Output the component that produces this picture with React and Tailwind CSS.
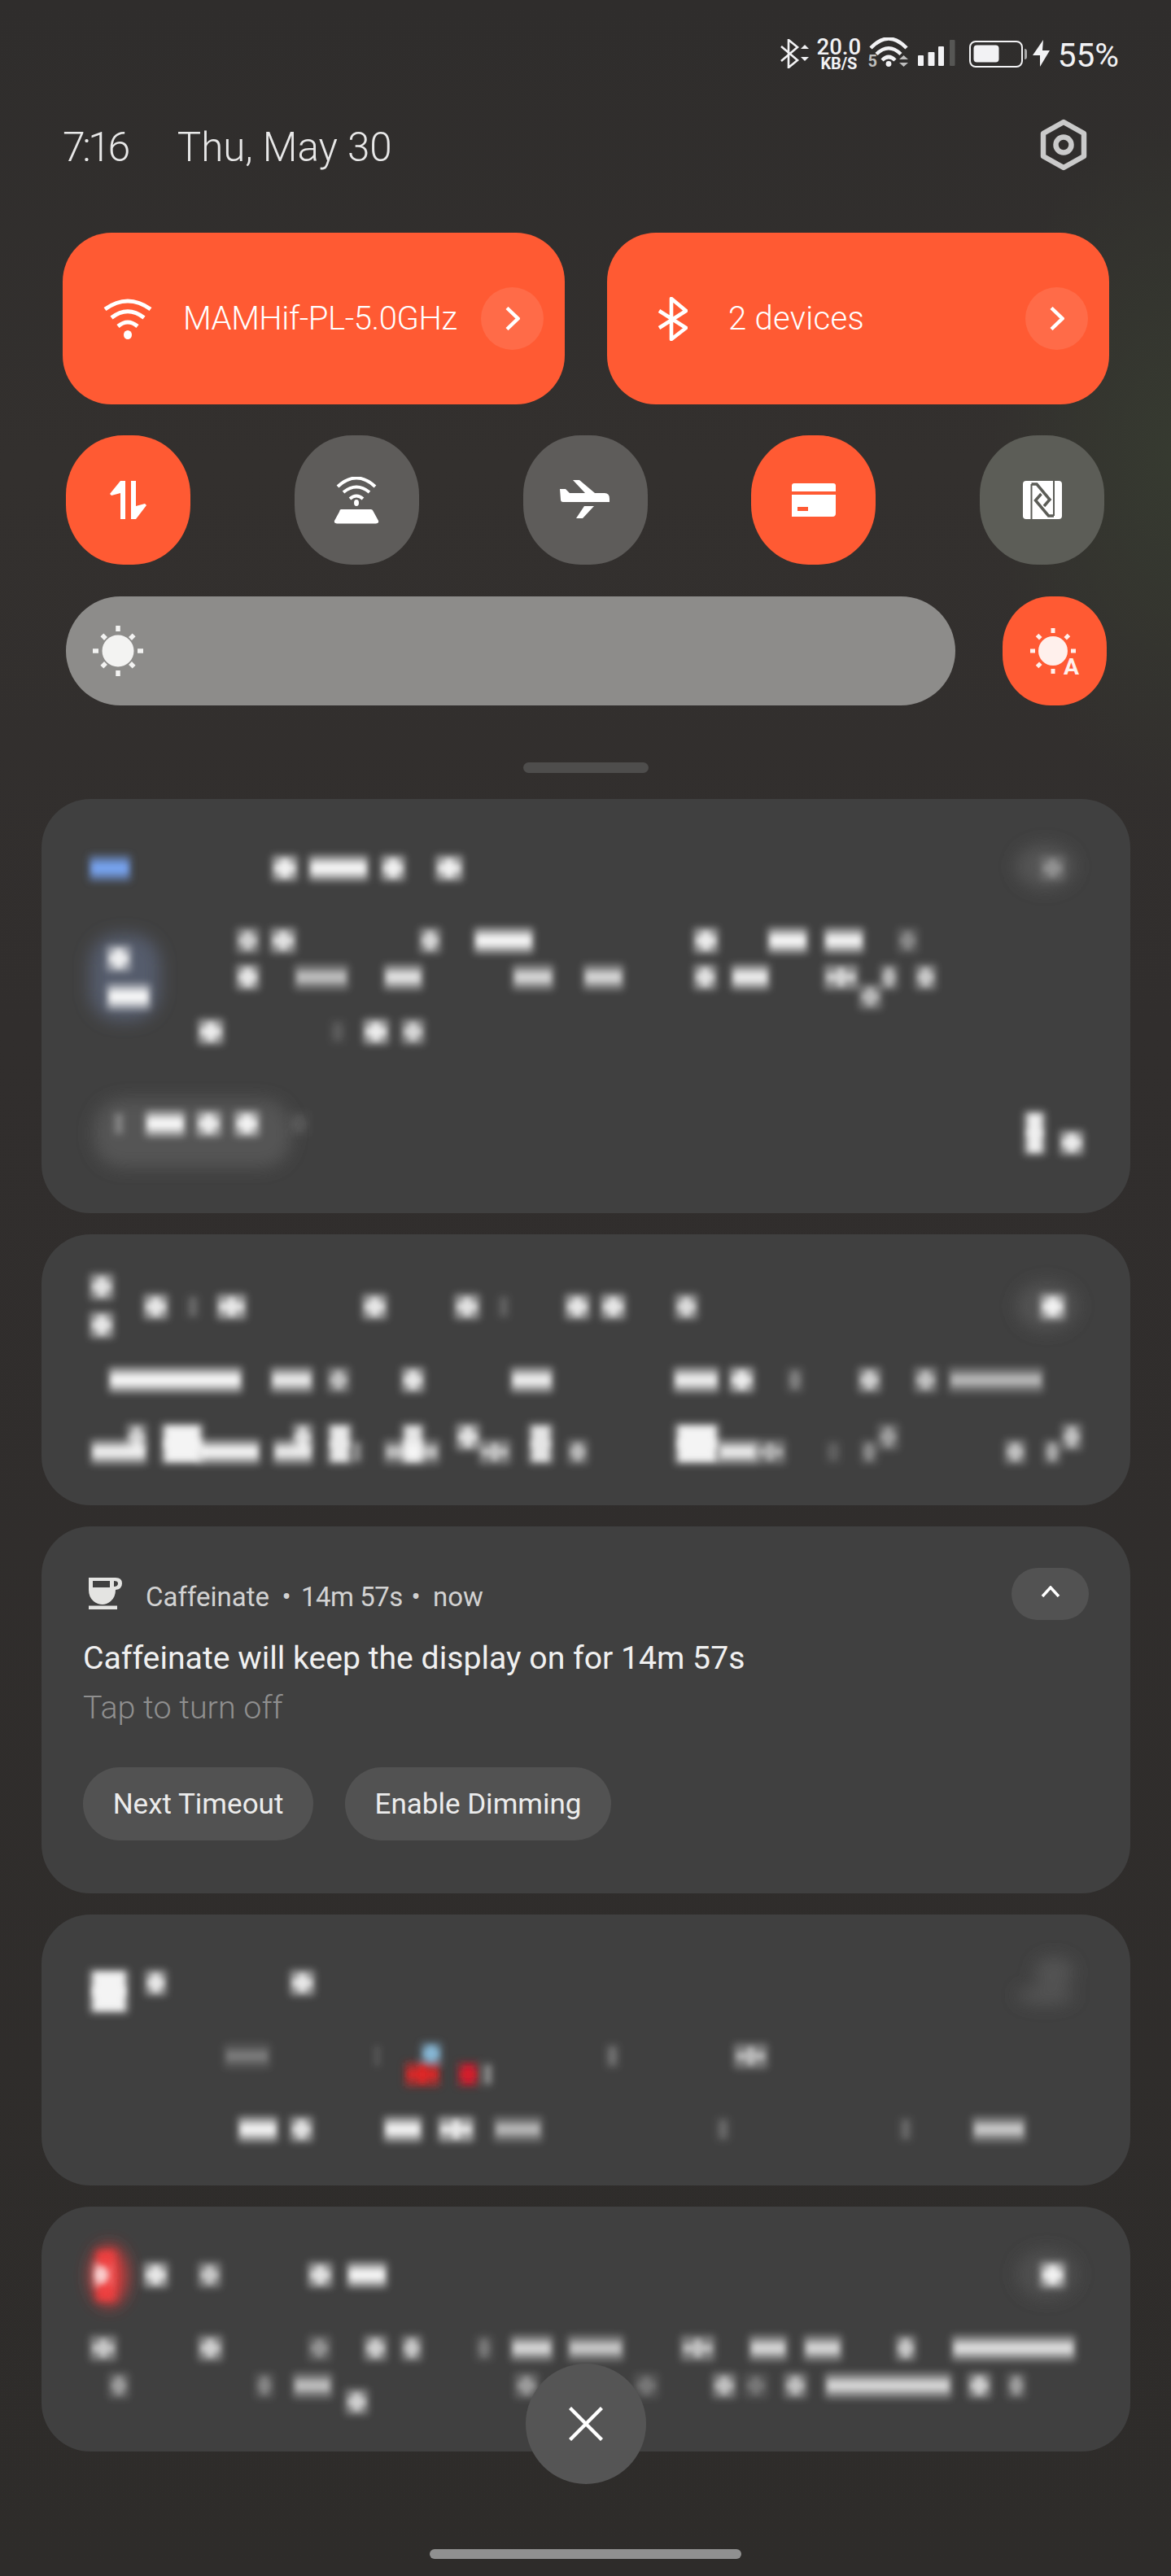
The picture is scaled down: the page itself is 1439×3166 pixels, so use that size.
import React from "react";

const FONT = "font-['Roboto','Liberation_Sans',sans-serif]";

const r = (cy, list) => list.map(([a, b, op, c]) => [a, b, cy - 18, cy + 18, op, c]);

function Blobs({ id, x, y, w, h, items, soft = [] }) {
  return (
    <svg viewBox={`${x} ${y} ${w} ${h}`} width={w} height={h} className="block">
      <defs>
        <filter id={id + "h"} filterUnits="userSpaceOnUse" x={x} y={y} width={w} height={h}>
          <feGaussianBlur stdDeviation="5" />
        </filter>
        <filter id={id + "c"} filterUnits="userSpaceOnUse" x={x} y={y} width={w} height={h}>
          <feGaussianBlur stdDeviation="3.5" />
        </filter>
        <filter id={id + "s"} filterUnits="userSpaceOnUse" x={x} y={y} width={w} height={h}>
          <feGaussianBlur stdDeviation="10" />
        </filter>
      </defs>
      <g filter={`url(#${id + "s"})`}>
        {soft.map(([a, b, t, u, c], i) => (
          <rect key={i} x={a + 8} y={t + 8} width={b - a - 16} height={u - t - 16} fill={c} rx="36" />
        ))}
      </g>
      <g filter={`url(#${id + "h"})`}>
        {items.map(([a, b, t, u, op, c], i) => (
          <rect key={i} x={a + 3} y={t + 3} width={Math.max(b - a - 6, 4)} height={u - t - 6} fill={c || "#fff"} opacity={op * 0.6} />
        ))}
      </g>
      <g filter={`url(#${id + "c"})`}>
        {items.map(([a, b, t, u, op, c], i) => {
          const mx = (a + b) / 2;
          const my = (t + u) / 2;
          const tall = u - t > 45;
          const narrow = b - a < 50;
          const band = narrow ? 8 : 13;
          return (
            <g key={i} fill={c || "#fff"} opacity={op * 0.85}>
              <rect x={a + 6} y={my - band / 2} width={Math.max(b - a - 12, 4)} height={band} />
              {(narrow || tall) && (
                <rect
                  x={tall ? a + 8 : mx - 4}
                  y={t + 7}
                  width={tall ? Math.max(b - a - 16, 4) : 8}
                  height={Math.max(u - t - 14, 4)}
                />
              )}
            </g>
          );
        })}
      </g>
    </svg>
  );
}

const card1 = [
  ...r(1067, [[107, 163, 1, "#79a8f8"], [332, 368, 1], [377, 455, 1], [466, 500, 1], [533, 571, 1], [1276, 1311, 0.28]]),
  ...r(1156, [[288, 321, 0.7], [330, 366, 0.85], [513, 544, 0.75], [580, 658, 1], [850, 885, 0.95], [941, 995, 1], [1010, 1064, 0.95], [1100, 1131, 0.3]]),
  ...r(1201, [[288, 321, 0.9], [359, 431, 0.55], [469, 522, 0.8], [627, 683, 0.7], [714, 769, 0.7], [850, 883, 0.85], [896, 948, 0.9], [1010, 1057, 0.72], [1079, 1106, 0.55], [1122, 1153, 0.65]]),
  ...r(1225, [[1053, 1086, 0.55]]),
  ...r(1268, [[241, 277, 0.95], [402, 428, 0.1], [444, 480, 0.95], [491, 524, 0.75]]),
  ...r(1178, [[129, 163, 0.95]]),
  ...r(1225, [[129, 187, 1]]),
  ...r(1381, [[136, 156, 0.2], [176, 230, 1], [239, 274, 0.95], [286, 321, 1], [352, 384, 0.08]]),
  [1256, 1287, 1363, 1422, 0.95],
  [1300, 1334, 1387, 1422, 0.95],
];
const soft1 = [
  [102, 205, 1140, 1263, "#555c6c"],
  [107, 366, 1343, 1443, "#545454"],
  [1240, 1329, 1030, 1100, "#545454"],
];

const card2 = [
  [108, 142, 1563, 1600, 0.85],
  [108, 142, 1610, 1647, 0.9],
  ...r(1606, [[174, 209, 0.9], [226, 248, 0.15], [264, 305, 0.9], [443, 478, 0.9], [556, 592, 0.85], [608, 630, 0.12], [692, 727, 0.9], [736, 771, 0.9], [827, 860, 0.8], [1276, 1311, 1]]),
  ...r(1696, [[131, 300, 1], [330, 387, 0.85], [400, 432, 0.6], [491, 524, 0.9], [625, 682, 0.9], [825, 886, 0.9], [894, 929, 0.95], [964, 990, 0.25], [1052, 1085, 0.7], [1121, 1154, 0.6], [1163, 1285, 0.5]]),
  [109, 183, 1767, 1802, 0.9], [153, 183, 1747, 1785, 0.7],
  [196, 252, 1747, 1802, 1], [240, 322, 1767, 1802, 0.95],
  [333, 387, 1767, 1802, 0.85], [357, 387, 1747, 1785, 0.8],
  [400, 435, 1747, 1802, 0.9], [430, 448, 1767, 1802, 0.3],
  [491, 524, 1747, 1802, 0.85], [469, 543, 1767, 1802, 0.55],
  [558, 592, 1747, 1785, 0.85], [586, 630, 1767, 1802, 0.6],
  [647, 682, 1747, 1802, 0.85], [695, 725, 1767, 1802, 0.55],
  [827, 886, 1747, 1802, 1], [880, 933, 1767, 1802, 0.85], [925, 968, 1767, 1802, 0.5],
  [1011, 1037, 1767, 1802, 0.12], [1055, 1081, 1767, 1802, 0.3], [1076, 1107, 1747, 1785, 0.4],
  [1232, 1263, 1767, 1802, 0.6], [1280, 1306, 1767, 1802, 0.45], [1302, 1332, 1747, 1785, 0.6],
];
const soft2 = [[1241, 1332, 1568, 1643, "#525252"]];

const card4 = [
  [108, 160, 2418, 2477, 1],
  ...r(2437, [[176, 207, 0.9], [354, 389, 0.9]]),
  ...r(2527, [[272, 335, 0.22], [455, 472, 0.08], [741, 764, 0.18], [899, 946, 0.55]]),
  [515, 545, 2508, 2540, 1, "#8cc0e0"],
  [495, 543, 2532, 2567, 1, "#ec2626"],
  [560, 591, 2532, 2567, 1, "#e01c2c"],
  [591, 608, 2532, 2567, 0.3],
  ...r(2617, [[290, 344, 0.95], [354, 387, 0.85], [469, 521, 0.95], [536, 585, 0.9], [604, 669, 0.5], [877, 900, 0.15], [1102, 1124, 0.15], [1192, 1263, 0.6]]),
];
const soft4 = [[1241, 1328, 2433, 2472, "#525252"], [1263, 1328, 2397, 2450, "#525252"]];

const card5 = [
  [114, 146, 2762, 2832, 1, "#f04040"],
  [112, 138, 2780, 2812, 0.85],
  ...r(2796, [[174, 209, 0.9], [241, 274, 0.65], [376, 411, 0.85], [424, 478, 1], [1276, 1311, 1]]),
  ...r(2886, [[108, 146, 0.65], [241, 276, 0.7], [376, 409, 0.35], [445, 478, 0.7], [491, 521, 0.65], [582, 608, 0.22], [625, 682, 0.7], [695, 769, 0.6], [834, 881, 0.6], [918, 970, 0.7], [985, 1037, 0.7], [1098, 1128, 0.65], [1167, 1324, 0.75]]),
  ...r(2932, [[131, 161, 0.4], [311, 339, 0.28], [357, 411, 0.55], [630, 664, 0.4], [777, 812, 0.22], [873, 907, 0.6], [912, 946, 0.22], [961, 994, 0.6], [1011, 1172, 0.7], [1187, 1220, 0.7], [1235, 1263, 0.4]]),
  ...r(2952, [[422, 455, 0.7]]),
];
const soft5 = [[1241, 1332, 2757, 2833, "#505050"], [104, 164, 2752, 2842, "#d83c3c"]];

function Wifi({ className }) {
  return (
    <svg viewBox="0 0 60 50" className={className} fill="none" stroke="#fff" strokeWidth="5">
      <path d="M2 13 Q30 -7 58 13" />
      <path d="M10 23.5 Q30 8 50 23.5" />
      <path d="M18 34 Q30 24 42 34" />
      <ellipse cx="30" cy="44.5" rx="5" ry="5.5" fill="#fff" stroke="none" />
    </svg>
  );
}

function Chevron({ className }) {
  return (
    <svg viewBox="0 0 18 29" className={className} fill="none" stroke="#fff" strokeWidth="4.4">
      <path d="M2 1.5 L15.5 14.5 L2 27.5" />
    </svg>
  );
}

function BigTile({ icon, label, iconBox, pad }) {
  return (
    <div className="h-[211px] w-[617px] rounded-[60px] bg-[#ff5a33] flex items-center">
      <div className={iconBox}>{icon}</div>
      <span className={`${pad} text-[40px] font-light text-white leading-none whitespace-nowrap`}>{label}</span>
      <div className="ml-auto mr-[26px] w-[77px] h-[77px] rounded-full bg-[#ff6b48] flex items-center justify-center">
        <Chevron className="w-[18px] h-[29px]" />
      </div>
    </div>
  );
}

function Round({ tone = "bg-[#5e5c5a]", children }) {
  return (
    <div className={`w-[153px] h-[159px] rounded-[46%] flex items-center justify-center ${tone}`}>
      {children}
    </div>
  );
}

function SunRays({ cx, cy, a, b, d, w, skip }) {
  const rays = [];
  for (let i = 0; i < 8; i++) {
    if (skip === i) continue;
    const ang = i * 45;
    const isDiag = i % 2 === 1;
    rays.push(
      isDiag ? (
        <rect key={i} x={cx - w / 2} y={cy - d - w / 2} width={w} height={w + 1} transform={`rotate(${ang} ${cx} ${cy})`} />
      ) : (
        <rect key={i} x={cx - w / 2} y={cy - b} width={w} height={b - a} transform={`rotate(${ang} ${cx} ${cy})`} />
      )
    );
  }
  return <g fill="currentColor">{rays}</g>;
}

function Card({ className = "", children }) {
  return <div className={`w-[1338px] rounded-[60px] bg-[#404040] overflow-hidden ${className}`}>{children}</div>;
}

export default function App() {
  return (
    <div className={`${FONT} relative w-[1439px] h-[3166px] overflow-hidden bg-[#302e2c] bg-[radial-gradient(ellipse_220px_420px_at_100%_560px,#363a30,transparent),linear-gradient(180deg,#2f2d2c_0%,#33302e_18%,#312e2d_40%,#2e2c2a_100%)]`}>
      {/* status bar */}
      <div className="h-[100px] pr-[64px] pt-[46px] flex justify-end items-start text-[#f2f2f4]">
        <svg viewBox="0 0 36 36" className="w-[36px] h-[36px] mt-[2px]" fill="none" stroke="#f2f2f4" strokeWidth="2.6">
          <path d="M1 9 L21 26 L10 35 L10 1 L21 10 L1 27" />
          <path d="M25 12 L30 7 L35 12 Z" fill="#f2f2f4" stroke="none" />
          <path d="M25 22 L30 27 L35 22 Z" fill="#f2f2f4" stroke="none" />
        </svg>
        <div className="ml-[8px] w-[56px] flex flex-col items-center">
          <span className="text-[27.5px] leading-[24px] font-medium">20.0</span>
          <span className="text-[20px] leading-[17px] font-bold tracking-[-0.2px]">KB/S</span>
        </div>
        <svg viewBox="0 0 50 44" className="w-[50px] h-[44px] ml-[8px]" fill="none">
          <g stroke="#f2f2f4" strokeWidth="4.500">
            <path d="M3 13 Q25 -10 47 13" />
            <path d="M10 20.500 Q25 6 40 20.500" />
            <path d="M17 28 Q25 20 33 28" />
          </g>
          <circle cx="25" cy="32.500" r="3.400" fill="#f2f2f4" />
          <path d="M38 27 L43.500 22 L49 27 Z M38 31 L43.500 36 L49 31 Z" fill="#bdbdbd" />
          <text x="-0.5" y="36" fontSize="20" fontWeight="700" fill="#bdbdbd" fontFamily="Roboto">5</text>
        </svg>
        <svg viewBox="0 0 46 33" className="w-[46px] h-[33px] ml-[11px] mt-[3px]" fill="#f2f2f4">
          <rect x="0" y="19" width="7" height="13" rx="1" />
          <rect x="12.500" y="15" width="8" height="17" rx="1" />
          <rect x="25" y="8" width="7" height="24" rx="1" />
          <rect x="39" y="0" width="6.500" height="32" rx="1" fill="#565654" />
        </svg>
        <svg viewBox="0 0 72 33" className="w-[72px] h-[33px] ml-[17px] mt-[4px]">
          <rect x="1" y="1" width="64" height="31" rx="7" fill="none" stroke="#f2f2f4" strokeWidth="2" />
          <rect x="5.500" y="5.500" width="31" height="21" rx="4" fill="#f2f2f4" />
          <path d="M68 10 a3 3 0 0 1 3 3 v7 a3 3 0 0 1 -3 3 z" fill="#aaa" />
        </svg>
        <svg viewBox="0 0 21 33" className="w-[21px] h-[33px] ml-[6px] mt-[3px]" fill="#f2f2f4">
          <path d="M13 0 L0 19 H9 L9 33 L21 13 H12 Z" />
        </svg>
        <span className="ml-[10px] text-[40.5px] leading-[44px] font-normal">55%</span>
      </div>

      {/* clock row */}
      <div className="h-[186px] pl-[77px] pr-[103px] flex items-start text-[#e8e8e8]">
        <span className="text-[50px] leading-[60px] font-light mt-[51px] tracking-[-3.5px]">7:16</span>
        <span className="ml-[61px] text-[49.300px] leading-[60px] font-light mt-[51px]">Thu, May 30</span>
        <svg viewBox="0 0 58 64" className="ml-auto mt-[46px] w-[58px] h-[64px]" fill="none" stroke="#cacaca" strokeWidth="6.500">
          <path d="M29 4 L54 18 V46 L29 60 L4 46 V18 Z" strokeLinejoin="round" />
          <circle cx="29" cy="32" r="9.500" />
        </svg>
      </div>

      {/* big tiles */}
      <div className="pl-[77px] flex gap-[52px]">
        <BigTile
          label="MAMHif-PL-5.0GHz"
          pad="ml-[38px] tracking-[-0.4px]"
          iconBox="ml-[50px]"
          icon={<Wifi className="w-[60px] h-[50px] block" />}
        />
        <BigTile
          label="2 devices"
          pad="ml-[50px] tracking-[0.3px]"
          iconBox="ml-[62px]"
          icon={
            <svg viewBox="0 0 37 54" className="w-[37px] h-[54px] block" fill="none" stroke="#fff" strokeWidth="4.600" strokeLinejoin="round">
              <path d="M2 17 L35 38 L17 52 V2 L35 17 L2 38" />
            </svg>
          }
        />
      </div>

      {/* round tiles */}
      <div className="mt-[38px] pl-[81px] pr-[82px] flex justify-between">
        <Round tone="bg-[#ff5a33]">
          <svg viewBox="0 0 46 48" className="w-[46px] h-[48px]" fill="#fff">
            <path d="M13 0 H19 V47 H13 V15 L2 18 L0 16 Z" />
            <path d="M26 0 H32 V31 L43 28 L45 30 L32 47 H26 Z" />
          </svg>
        </Round>
        <Round>
          <svg viewBox="0 0 56 58" className="w-[56px] h-[58px]">
            <g fill="none" stroke="#fff" strokeWidth="4">
              <path d="M5 12 Q28 -9 51 12" />
              <path d="M12 19 Q28 6 44 19" />
              <path d="M20 27 Q28 20 36 27" />
            </g>
            <ellipse cx="28" cy="32" rx="3" ry="4" fill="#fff" />
            <path d="M9 40 H46 Q48 40 49 43 L55 54 Q56 57 52 57.500 H4 Q0 57 1 54 L7 43 Q7.500 40 9 40 Z" fill="#fff" />
          </svg>
        </Round>
        <Round>
          <svg viewBox="0 0 62 49" className="w-[62px] h-[49px] mt-[-2px]" fill="#fff">
            <path d="M0 12 H7 L12 17 H31 L16 1 H24 L43 17 H55 Q61 17 61 24 V28 H4 Q1 28 1 25 Z" />
            <path d="M30 33 H42 L28 48 H20 Z" />
          </svg>
        </Round>
        <Round tone="bg-[#ff5a33]">
          <svg viewBox="0 0 54 41" className="w-[54px] h-[41px]" fill="#fff">
            <path d="M0 10 V3 Q0 0 3 0 H51 Q54 0 54 3 V10 Z" />
            <path fillRule="evenodd" d="M0 14 H54 V37 Q54 41 50 41 H0 Z M7 29 V34 H20 V29 Z" />
          </svg>
        </Round>
        <Round tone="bg-[#5c5d57]">
          <svg viewBox="0 0 48 47" className="w-[48px] h-[47px]">
            <rect width="48" height="47" rx="4" fill="#fff" />
            <g fill="none" stroke="#5c5d57">
              <path d="M10.500 47 V4" strokeWidth="2" />
              <path d="M38 0 V43" strokeWidth="2" />
              <path d="M10.500 4 H17 L33 23 L26 31" strokeWidth="3.500" />
              <path d="M38 43 H31.500 L15.500 24 L22.500 16" strokeWidth="3.500" />
            </g>
          </svg>
        </Round>
      </div>

      {/* brightness */}
      <div className="mt-[39px] pl-[81px] flex">
        <div className="w-[1093px] h-[134px] rounded-full bg-[#8d8c8a] flex items-center pl-[33px]">
          <svg viewBox="0 0 62 62" className="w-[62px] h-[62px] text-[#f3f3f2]">
            <SunRays cx={31} cy={31} a={24} b={31} d={25} w={5.5} />
            <circle cx="31" cy="31" r="19.500" fill="#f3f3f2" />
          </svg>
        </div>
        <div className="ml-[58px] w-[128px] h-[134px] rounded-[46%] bg-[#ff5a33] flex items-center justify-center">
          <svg viewBox="0 -4 66 70" className="w-[66px] h-[70px] text-[#fff0ec]">
            <SunRays cx={31} cy={31} a={22} b={28} d={25} w={5} skip={3} />
            <circle cx="31" cy="31" r="18" fill="#fff0ec" />
            <text x="44" y="60" fontSize="28" fontWeight="700" fill="#fff0ec" fontFamily="Roboto" textLength="19" lengthAdjust="spacingAndGlyphs">A</text>
          </svg>
        </div>
      </div>

      {/* handle */}
      <div className="mt-[70px] mx-auto w-[154px] h-[13px] rounded-full bg-[#4e4d4c]" />

      {/* notifications */}
      <div className="mt-[32px] pl-[51px] flex flex-col gap-[26px]">
        <Card className="h-[509px]">
          <Blobs id="c1" x={51} y={982} w={1338} h={509} items={card1} soft={soft1} />
        </Card>
        <Card className="h-[333px]">
          <Blobs id="c2" x={51} y={1517} w={1338} h={333} items={card2} soft={soft2} />
        </Card>
        <Card className="h-[451px] pl-[51px] pr-[51px]">
          <div className="pt-[51px] h-[141px] flex items-start">
            <svg viewBox="0 0 41 39" className="w-[41px] h-[39px] ml-[7px] mt-[12px]" fill="#e4e4e2">
              <path fillRule="evenodd" d="M0 0 H33 Q41 0 41 7 Q41 14 33 15 Q33 24 27 29 Q22 33 17 33 Q11 33 6 29 Q0 24 0 15 Z M5 4 V12 H26 V4 Z M31 4 V11 Q36 11 36 7 Q36 4 31 4 Z" />
              <rect y="34.500" width="35" height="4.500" />
            </svg>
            <div className="ml-[29px] mt-[17px] text-[33px] leading-[38px] text-[#d2d2d2] flex whitespace-nowrap">
              <span className="w-[155px]">Caffeinate</span>
              <span className="w-[36px] text-center">•</span>
              <span className="w-[120px] tracking-[-0.5px]">14m 57s</span>
              <span className="w-[42px] text-center">•</span>
              <span>now</span>
            </div>
            <div className="ml-auto w-[95px] h-[64px] rounded-full bg-[#525252] flex items-center justify-center">
              <svg viewBox="0 0 24 14" className="w-[24px] h-[14px] mt-[-6px]" fill="none" stroke="#fff" strokeWidth="3.500">
                <path d="M2 13 L12 2 L22 13" />
              </svg>
            </div>
          </div>
          <div className="text-[39.200px] leading-[46px] text-[#f0f0f0] mt-[-2px]">Caffeinate will keep the display on for 14m 57s</div>
          <div className="text-[39.500px] leading-[46px] font-light text-[#8f8f8f] mt-[15px]">Tap to turn off</div>
          <div className="mt-[50px] flex gap-[39px] text-[35px] text-[#ececec] leading-none">
            <div className="w-[283px] h-[90px] rounded-full bg-[#525252] flex items-center justify-center">Next Timeout</div>
            <div className="w-[327px] h-[90px] rounded-full bg-[#525252] flex items-center justify-center">Enable Dimming</div>
          </div>
        </Card>
        <Card className="h-[333px]">
          <Blobs id="c4" x={51} y={2353} w={1338} h={333} items={card4} soft={soft4} />
        </Card>
        <Card className="h-[301px]">
          <Blobs id="c5" x={51} y={2712} w={1338} h={301} items={card5} soft={soft5} />
        </Card>
      </div>

      {/* close button */}
      <div className="absolute left-[646px] top-[2905px] w-[148px] h-[148px] rounded-full bg-[#555555] flex items-center justify-center">
        <svg viewBox="0 0 42 42" className="w-[42px] h-[42px]" fill="none" stroke="#fff" strokeWidth="4.400">
          <path d="M1.500 1.500 L40.500 40.500 M40.500 1.500 L1.500 40.500" />
        </svg>
      </div>

      {/* home bar */}
      <div className="absolute left-[528px] top-[3133px] w-[383px] h-[12px] rounded-full bg-[#909090]" />
    </div>
  );
}
